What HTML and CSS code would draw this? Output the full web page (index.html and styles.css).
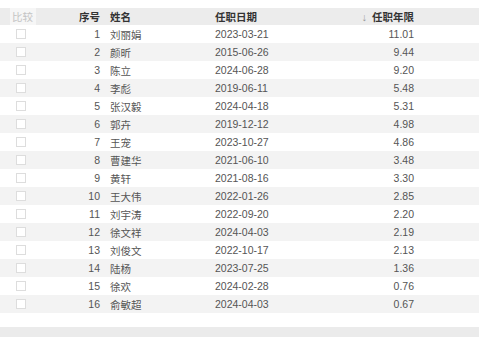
FILE: index.html
```html
<!DOCTYPE html>
<html lang="zh">
<head>
<meta charset="utf-8">
<link rel="stylesheet" href="styles.css">
</head>
<body>
<div class="table">
  <div class="row head">
    <div class="c1"><span class="cmp">比较</span></div>
    <div class="c2">序号</div>
    <div class="c3">姓名</div>
    <div class="c4">任职日期</div>
    <div class="c5"><span class="arrow">↓</span>任职年限</div>
    <div class="c6"></div>
  </div>
  <div class="row"><div class="c1"><span class="cb"></span></div><div class="c2">1</div><div class="c3">刘丽娟</div><div class="c4">2023-03-21</div><div class="c5">11.01</div><div class="c6"></div></div>
  <div class="row"><div class="c1"><span class="cb"></span></div><div class="c2">2</div><div class="c3">颜昕</div><div class="c4">2015-06-26</div><div class="c5">9.44</div><div class="c6"></div></div>
  <div class="row"><div class="c1"><span class="cb"></span></div><div class="c2">3</div><div class="c3">陈立</div><div class="c4">2024-06-28</div><div class="c5">9.20</div><div class="c6"></div></div>
  <div class="row"><div class="c1"><span class="cb"></span></div><div class="c2">4</div><div class="c3">李彪</div><div class="c4">2019-06-11</div><div class="c5">5.48</div><div class="c6"></div></div>
  <div class="row"><div class="c1"><span class="cb"></span></div><div class="c2">5</div><div class="c3">张汉毅</div><div class="c4">2024-04-18</div><div class="c5">5.31</div><div class="c6"></div></div>
  <div class="row"><div class="c1"><span class="cb"></span></div><div class="c2">6</div><div class="c3">郭卉</div><div class="c4">2019-12-12</div><div class="c5">4.98</div><div class="c6"></div></div>
  <div class="row"><div class="c1"><span class="cb"></span></div><div class="c2">7</div><div class="c3">王宠</div><div class="c4">2023-10-27</div><div class="c5">4.86</div><div class="c6"></div></div>
  <div class="row"><div class="c1"><span class="cb"></span></div><div class="c2">8</div><div class="c3">曹建华</div><div class="c4">2021-06-10</div><div class="c5">3.48</div><div class="c6"></div></div>
  <div class="row"><div class="c1"><span class="cb"></span></div><div class="c2">9</div><div class="c3">黄轩</div><div class="c4">2021-08-16</div><div class="c5">3.30</div><div class="c6"></div></div>
  <div class="row"><div class="c1"><span class="cb"></span></div><div class="c2">10</div><div class="c3">王大伟</div><div class="c4">2022-01-26</div><div class="c5">2.85</div><div class="c6"></div></div>
  <div class="row"><div class="c1"><span class="cb"></span></div><div class="c2">11</div><div class="c3">刘宇涛</div><div class="c4">2022-09-20</div><div class="c5">2.20</div><div class="c6"></div></div>
  <div class="row"><div class="c1"><span class="cb"></span></div><div class="c2">12</div><div class="c3">徐文祥</div><div class="c4">2024-04-03</div><div class="c5">2.19</div><div class="c6"></div></div>
  <div class="row"><div class="c1"><span class="cb"></span></div><div class="c2">13</div><div class="c3">刘俊文</div><div class="c4">2022-10-17</div><div class="c5">2.13</div><div class="c6"></div></div>
  <div class="row"><div class="c1"><span class="cb"></span></div><div class="c2">14</div><div class="c3">陆杨</div><div class="c4">2023-07-25</div><div class="c5">1.36</div><div class="c6"></div></div>
  <div class="row"><div class="c1"><span class="cb"></span></div><div class="c2">15</div><div class="c3">徐欢</div><div class="c4">2024-02-28</div><div class="c5">0.76</div><div class="c6"></div></div>
  <div class="row"><div class="c1"><span class="cb"></span></div><div class="c2">16</div><div class="c3">俞敏超</div><div class="c4">2024-04-03</div><div class="c5">0.67</div><div class="c6"></div></div>
</div>
<div class="footer"></div>
</body>
</html>
```

FILE: styles.css
```css
html, body {
  margin: 0;
  padding: 0;
  background: #ffffff;
}
body {
  padding-top: 8px;
  font-family: "Liberation Sans", "Noto Sans CJK SC", sans-serif;
  font-size: 10.5px;
  color: #555555;
}
.table {
  display: flex;
  flex-direction: column;
}
.row {
  display: grid;
  grid-template-columns: 42px 58px 115px 100px 99px 1fr;
  height: 18px;
  align-items: center;
  background: #ffffff;
}
.row:nth-child(odd) {
  background: #f3f3f3;
}
.row.head {
  height: 17px;
  background: #ececec;
  color: #333333;
  font-weight: bold;
}
.c1 {
  display: flex;
  align-items: center;
  height: 100%;
}
.c2 {
  text-align: right;
}
.c3 {
  padding-left: 10px;
}
.c5 {
  text-align: right;
}
.cmp {
  display: flex;
  align-items: center;
  margin-left: 10px;
  padding-left: 2px;
  width: 24px;
  height: 100%;
  background: #f6f6f6;
  color: #c4c4c4;
  font-weight: normal;
}
.cb {
  display: block;
  margin-left: 16px;
  width: 8px;
  height: 8px;
  border: 1px solid #dddddd;
  background: #ffffff;
}
.arrow {
  color: #999999;
  font-weight: normal;
  margin-right: 5px;
}
.footer {
  margin-top: 14px;
  height: 12px;
  background: #ebebeb;
}
```
